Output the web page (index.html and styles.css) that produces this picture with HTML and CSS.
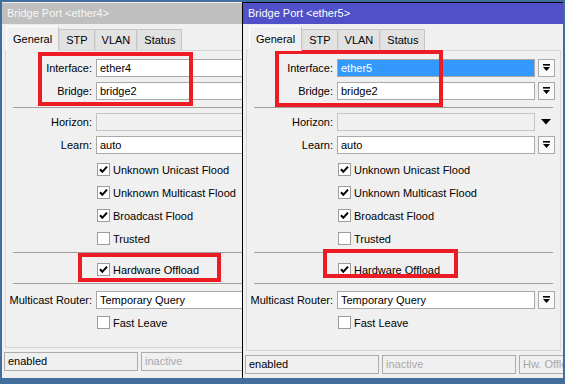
FILE: index.html
```html
<!DOCTYPE html>
<html>
<head>
<meta charset="utf-8">
<link rel="stylesheet" href="styles.css">
</head>
<body>
<div class="desk">
  <section class="win win--inactive">
    <div class="titlebar">Bridge Port &lt;ether4&gt;</div>
    <div class="inner">
      <div class="tabs">
        <div class="tab tab--active">General</div>
        <div class="tab">STP</div>
        <div class="tab">VLAN</div>
        <div class="tab">Status</div>
      </div>
      <div class="panel">
        <div class="row"><span class="lbl">Interface:</span><div class="field">ether4</div><div class="btn"><svg width="15" height="16" viewBox="0 0 15 16"><rect x="4" y="4" width="7" height="1.6" fill="#000"/><path d="M4 7 H11 L7.5 11 Z" fill="#000"/></svg></div></div>
        <div class="row"><span class="lbl">Bridge:</span><div class="field">bridge2</div><div class="btn"><svg width="15" height="16" viewBox="0 0 15 16"><rect x="4" y="4" width="7" height="1.6" fill="#000"/><path d="M4 7 H11 L7.5 11 Z" fill="#000"/></svg></div></div>
        <div class="sep"></div>
        <div class="row"><span class="lbl">Horizon:</span><div class="field field--off"></div><div class="arrow"><svg width="10" height="6" viewBox="0 0 10 6"><path d="M0 0 H10 L5 5.5 Z" fill="#000"/></svg></div></div>
        <div class="row row--last"><span class="lbl">Learn:</span><div class="field">auto</div><div class="btn"><svg width="15" height="16" viewBox="0 0 15 16"><rect x="4" y="4" width="7" height="1.6" fill="#000"/><path d="M4 7 H11 L7.5 11 Z" fill="#000"/></svg></div></div>
        <div class="check"><span class="cb"><svg width="11" height="11" viewBox="0 0 11 11"><path d="M2 5.3 L4.3 7.8 L9 2.6" fill="none" stroke="#000" stroke-width="2"/></svg></span>Unknown Unicast Flood</div>
        <div class="check"><span class="cb"><svg width="11" height="11" viewBox="0 0 11 11"><path d="M2 5.3 L4.3 7.8 L9 2.6" fill="none" stroke="#000" stroke-width="2"/></svg></span>Unknown Multicast Flood</div>
        <div class="check"><span class="cb"><svg width="11" height="11" viewBox="0 0 11 11"><path d="M2 5.3 L4.3 7.8 L9 2.6" fill="none" stroke="#000" stroke-width="2"/></svg></span>Broadcast Flood</div>
        <div class="check"><span class="cb"></span>Trusted</div>
        <div class="sep sep--tight"></div>
        <div class="check check--hw"><span class="cb"><svg width="11" height="11" viewBox="0 0 11 11"><path d="M2 5.3 L4.3 7.8 L9 2.6" fill="none" stroke="#000" stroke-width="2"/></svg></span>Hardware Offload</div>
        <div class="sep sep--low"></div>
        <div class="row row--mc"><span class="lbl">Multicast Router:</span><div class="field">Temporary Query</div><div class="btn"><svg width="15" height="16" viewBox="0 0 15 16"><rect x="4" y="4" width="7" height="1.6" fill="#000"/><path d="M4 7 H11 L7.5 11 Z" fill="#000"/></svg></div></div>
        <div class="check"><span class="cb"></span>Fast Leave</div>
      </div>
      <div class="status status--left">
        <div class="sbox">enabled</div>
        <div class="sbox sbox--dim sbox--clip">inactive</div>
      </div>
    </div>
    <div class="mark mark--l1"></div>
    <div class="mark mark--l2"></div>
  </section>

  <section class="win win--active">
    <div class="titlebar">Bridge Port &lt;ether5&gt;</div>
    <div class="inner">
      <div class="tabs">
        <div class="tab tab--active">General</div>
        <div class="tab">STP</div>
        <div class="tab">VLAN</div>
        <div class="tab">Status</div>
      </div>
      <div class="panel">
        <div class="row"><span class="lbl">Interface:</span><div class="field field--sel">ether5</div><div class="btn"><svg width="15" height="16" viewBox="0 0 15 16"><rect x="4" y="4" width="7" height="1.6" fill="#000"/><path d="M4 7 H11 L7.5 11 Z" fill="#000"/></svg></div></div>
        <div class="row"><span class="lbl">Bridge:</span><div class="field">bridge2</div><div class="btn"><svg width="15" height="16" viewBox="0 0 15 16"><rect x="4" y="4" width="7" height="1.6" fill="#000"/><path d="M4 7 H11 L7.5 11 Z" fill="#000"/></svg></div></div>
        <div class="sep"></div>
        <div class="row"><span class="lbl">Horizon:</span><div class="field field--off"></div><div class="arrow"><svg width="10" height="6" viewBox="0 0 10 6"><path d="M0 0 H10 L5 5.5 Z" fill="#000"/></svg></div></div>
        <div class="row row--last"><span class="lbl">Learn:</span><div class="field">auto</div><div class="btn"><svg width="15" height="16" viewBox="0 0 15 16"><rect x="4" y="4" width="7" height="1.6" fill="#000"/><path d="M4 7 H11 L7.5 11 Z" fill="#000"/></svg></div></div>
        <div class="check"><span class="cb"><svg width="11" height="11" viewBox="0 0 11 11"><path d="M2 5.3 L4.3 7.8 L9 2.6" fill="none" stroke="#000" stroke-width="2"/></svg></span>Unknown Unicast Flood</div>
        <div class="check"><span class="cb"><svg width="11" height="11" viewBox="0 0 11 11"><path d="M2 5.3 L4.3 7.8 L9 2.6" fill="none" stroke="#000" stroke-width="2"/></svg></span>Unknown Multicast Flood</div>
        <div class="check"><span class="cb"><svg width="11" height="11" viewBox="0 0 11 11"><path d="M2 5.3 L4.3 7.8 L9 2.6" fill="none" stroke="#000" stroke-width="2"/></svg></span>Broadcast Flood</div>
        <div class="check"><span class="cb"></span>Trusted</div>
        <div class="sep sep--tight"></div>
        <div class="check check--hw"><span class="cb"><svg width="11" height="11" viewBox="0 0 11 11"><path d="M2 5.3 L4.3 7.8 L9 2.6" fill="none" stroke="#000" stroke-width="2"/></svg></span>Hardware Offload</div>
        <div class="sep sep--low"></div>
        <div class="row row--mc"><span class="lbl">Multicast Router:</span><div class="field">Temporary Query</div><div class="btn"><svg width="15" height="16" viewBox="0 0 15 16"><rect x="4" y="4" width="7" height="1.6" fill="#000"/><path d="M4 7 H11 L7.5 11 Z" fill="#000"/></svg></div></div>
        <div class="check"><span class="cb"></span>Fast Leave</div>
      </div>
      <div class="status">
        <div class="sbox">enabled</div>
        <div class="sbox sbox--dim">inactive</div>
        <div class="sbox sbox--dim sbox--last">Hw. Offlo</div>
      </div>
    </div>
    <div class="mark mark--r1"></div>
    <div class="mark mark--r2"></div>
  </section>
</div>
</body>
</html>
```
FILE: styles.css
```css
* { box-sizing: border-box; }

html, body {
  margin: 0;
  width: 565px;
  height: 384px;
  overflow: hidden;
  background: #426e9e;
  font-family: "Liberation Sans", Arial, sans-serif;
  font-size: 11px;
  color: #000;
}

.desk {
  display: flex;
  align-items: flex-start;
  padding: 2px 0 0 2px;
  height: 384px;
}

.win {
  position: relative;
  display: flex;
  flex-direction: column;
  height: 376px;
  background: #f0f0f0;
  overflow: hidden;
  flex-shrink: 0;
}

.win--inactive {
  width: 240px;
  padding-top: 1px;
}

.win--active {
  width: 321px;
  border-left: 1px solid #000;
  border-top: 1px solid #000;
}

.titlebar {
  height: 21px;
  line-height: 21px;
  padding-left: 5px;
  color: #fff;
  white-space: nowrap;
  flex-shrink: 0;
}

.win--inactive .titlebar {
  background: #bfbfbf;
  color: #f6f6f6;
}

.win--active .titlebar {
  background: #5050c8;
}

.inner {
  width: 320px;
  flex: 1;
  display: flex;
  flex-direction: column;
}

.tabs {
  display: flex;
  align-items: flex-end;
  height: 24px;
  margin: 2px 0 0 4px;
  position: relative;
  z-index: 1;
  flex-shrink: 0;
}

.win--active .tabs { margin-left: 6px; }

.tab {
  height: 21px;
  line-height: 21px;
  padding: 0 6px;
  border: 1px solid #c6c6c6;
  border-bottom: none;
  border-left-color: #d8d8d8;
  background: #e2e2e2;
  white-space: nowrap;
}

.tab--active {
  height: 25px;
  line-height: 24px;
  margin-bottom: -1px;
  background: #f0f0f0;
  border-color: #c6c6c6;
  border-left-color: #ffffff;
  border-top-color: #ffffff;
}

.panel {
  flex: 1;
  display: flex;
  flex-direction: column;
  margin: 0 2px 0 3px;
  border: 1px solid #d8d8d8;
  padding-top: 8px;
}

.row {
  display: flex;
  align-items: center;
  height: 18px;
  margin-bottom: 5px;
  flex-shrink: 0;
}

.row--last { margin-bottom: 4px; }
.row--mc { margin-bottom: 2px; }

.lbl {
  width: 86px;
  margin-right: 4px;
  text-align: right;
  white-space: nowrap;
  flex-shrink: 0;
}

.field {
  width: 198px;
  height: 18px;
  line-height: 16px;
  padding-left: 3px;
  border: 1px solid #a9a9a9;
  background: #fff;
  flex-shrink: 0;
  white-space: nowrap;
}

.field--off {
  background: #f0f0f0;
  border-color: #c4c4c4;
}

.field--sel {
  background: #3399ff;
  color: #fff;
}

.btn {
  width: 17px;
  height: 18px;
  margin-left: 3px;
  border: 1px solid #a9a9a9;
  background: #fafafa;
  flex-shrink: 0;
  display: flex;
  align-items: center;
  justify-content: center;
}

.arrow {
  margin-left: 6px;
  width: 10px;
  height: 6px;
  display: flex;
  flex-shrink: 0;
}

.check {
  display: flex;
  align-items: center;
  height: 23px;
  padding-left: 91px;
  white-space: nowrap;
  flex-shrink: 0;
}

.check--hw { margin-top: 5px; }

.cb {
  width: 13px;
  height: 13px;
  margin-right: 3px;
  border: 1px solid #9c9c9c;
  background: #fff;
  display: flex;
  align-items: center;
  justify-content: center;
  flex-shrink: 0;
}

.sep {
  height: 1px;
  background: #a0a0a0;
  margin: 2px 7px 5px;
  flex-shrink: 0;
}

.sep--tight { margin: 2px 7px 0; }
.sep--low { margin: 2px 7px 7px; }

.status {
  display: flex;
  gap: 3px;
  height: 19px;
  margin: 4px 0 7px;
  padding-left: 2px;
  flex-shrink: 0;
}

.status--left { width: 240px; overflow: hidden; }

.win--active .status { margin-bottom: 4px; }

.sbox {
  width: 134px;
  height: 19px;
  line-height: 17px;
  padding-left: 3px;
  border: 1px solid #acacac;
  flex-shrink: 0;
  white-space: nowrap;
  overflow: hidden;
}

.sbox--dim { color: #a8a8a8; }
.sbox--clip { width: 101px; border-right: none; }
.sbox--last { width: 46px; border-right: none; }

.mark {
  position: absolute;
  border: 4px solid #ed1c24;
}

.mark--l1 { left: 36px; top: 50px; width: 155px; height: 54px; }
.mark--l2 { left: 76px; top: 251px; width: 143px; height: 29px; }
.mark--r1 { left: 32px; top: 47px; width: 168px; height: 57px; }
.mark--r2 { left: 80px; top: 246px; width: 135px; height: 29px; }
```
